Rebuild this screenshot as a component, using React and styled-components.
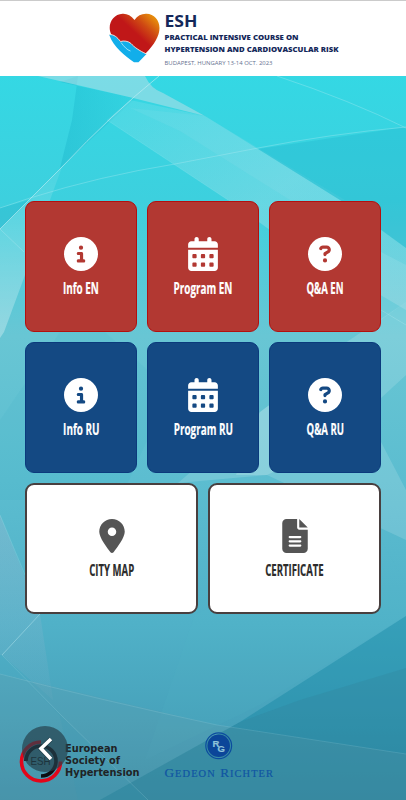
import React from 'react';
import styled, { createGlobalStyle } from 'styled-components';
import {
    FaCircleInfo,
    FaCalendarDays,
    FaCircleQuestion,
    FaLocationDot,
    FaFileLines
} from 'react-icons/fa6';

const GlobalStyle = createGlobalStyle`
    body {
        margin: 0;
        font-family: 'Open Sans', sans-serif;
    }
`

const Page = styled.div`
    position: relative;
    display: flex;
    flex-direction: column;
    width: 406px;
    height: 800px;
    overflow: hidden;
`

const Backdrop = styled.svg`
    position: absolute;
    top: 0;
    left: 0;
    z-index: -1;
`

const Header = styled.header`
    box-sizing: border-box;
    height: 76px;
    flex: none;
    padding-left: 105px;
    background: #fff;
    border-top: 1px solid #cbcbcb;
`

const Tiles = styled.main`
    display: grid;
    grid-template-columns: repeat(6, 1fr);
    grid-auto-rows: 131px;
    gap: 10px;
    padding: 125px 25px 0;
`

const tones = {
    red: { bg: '#b23832', line: '#b3100f', text: '#fff', icon: '#fff' },
    blue: { bg: '#144983', line: '#0b3a7c', text: '#fff', icon: '#fff' },
    white: { bg: '#fff', line: '#483f3f', text: '#2b2b2b', icon: '#555' }
}

const TileButton = styled.button`
    grid-column: span ${({ $wide }) => ($wide ? 3 : 2)};
    box-sizing: border-box;
    display: flex;
    flex-direction: column;
    align-items: center;
    margin: 0;
    padding: ${({ $wide }) => ($wide ? '34px' : '35px')} 0 0;
    border: ${({ $wide }) => ($wide ? '2px' : '1px')} solid ${({ $tone }) => tones[$tone].line};
    border-radius: 9px;
    background: ${({ $tone }) => tones[$tone].bg};
    color: ${({ $tone }) => tones[$tone].icon};
    font-family: inherit;
    cursor: pointer;
`

const Label = styled.span`
    margin-top: 5px;
    color: ${({ $tone }) => tones[$tone].text};
    font-size: 16.5px;
    font-weight: 700;
    line-height: 23px;
    white-space: nowrap;
    -webkit-text-stroke: 0.2px currentColor;
    transform: scaleX(${({ $squeeze }) => $squeeze});
`

const Footer = styled.footer`
    display: flex;
    align-items: flex-start;
    gap: 20px;
    margin-top: auto;
    padding-left: 18px;
    height: 74px;
`

const BackButton = styled.button`
    position: absolute;
    left: 22px;
    bottom: 28px;
    width: 46px;
    height: 46px;
    padding: 0;
    border: 0;
    border-radius: 50%;
    background: rgba(37, 65, 77, 0.7);
    cursor: pointer;
`

const Background = () => (
    <Backdrop width="406" height="800" viewBox="0 0 406 800">
        <defs>
            <linearGradient id="sea" x1="0" y1="0" x2="0" y2="1">
                <stop offset="0.09" stopColor="#34d8e4"/>
                <stop offset="0.25" stopColor="#3dd0de"/>
                <stop offset="0.42" stopColor="#68c6d4"/>
                <stop offset="0.6" stopColor="#5cbdd0"/>
                <stop offset="0.78" stopColor="#50b1c8"/>
                <stop offset="0.9" stopColor="#47a2bb"/>
                <stop offset="1" stopColor="#4094ad"/>
            </linearGradient>
            <linearGradient id="fade" x1="0" y1="0" x2="0" y2="1">
                <stop offset="0" stopColor="#fff" stopOpacity="0.08"/>
                <stop offset="1" stopColor="#fff" stopOpacity="0.3"/>
            </linearGradient>
            <linearGradient id="shade" x1="0" y1="0" x2="1" y2="0">
                <stop offset="0" stopColor="#0ba5c0" stopOpacity="0.28"/>
                <stop offset="1" stopColor="#0ba5c0" stopOpacity="0.06"/>
            </linearGradient>
            <linearGradient id="band" x1="0" y1="0" x2="1" y2="1">
                <stop offset="0" stopColor="#d9eaf0" stopOpacity="0.12"/>
                <stop offset="0.5" stopColor="#d9eaf0" stopOpacity="0.26"/>
                <stop offset="1" stopColor="#d9eaf0" stopOpacity="0.2"/>
            </linearGradient>
            <linearGradient id="strip" x1="0" y1="0" x2="0" y2="1">
                <stop offset="0" stopColor="#acb9d2" stopOpacity="0.3"/>
                <stop offset="1" stopColor="#acb9d2" stopOpacity="0.06"/>
            </linearGradient>
        </defs>
        <rect width="406" height="800" fill="url(#sea)"/>
        <path d="M78 76L72 120L60 168L136 98L129 97L60 82Z" fill="url(#shade)"/>
        <path d="M38 76H145Q151 89 163 93L205 116L129 97Z" fill="#c2dfe8" opacity="0.5"/>
        <path d="M107 120L130 100L205 116L340 200L406 248V310L270 230L228 200Z" fill="url(#band)"/>
        <path d="M130 108L180 131L290 200H345L205 116Z" fill="#d9eaf0" opacity="0.08"/>
        <path d="M406 127L258 149L340 200L406 248Z" fill="#0f9fc0" opacity="0.2"/>
        <path d="M0 208L30 200L0 229Z" fill="#109fbd" opacity="0.2"/>
        <path d="M0 229L62 167L50 200L25 275L4 332L0 338Z" fill="url(#fade)"/>
        <path d="M381 252L406 265V302L381 320Z" fill="#fff" opacity="0.1"/>
        <path d="M320 360L406 302V375L381 398Z" fill="#fff" opacity="0.14"/>
        <path d="M178 483L260 412L300 382L330 400L380 440L406 490V540L267 475Z" fill="#fff" opacity="0.14"/>
        <path d="M260 412L300 382L300 460L267 475H236Z" fill="#fff" opacity="0.16"/>
        <path d="M105 332L170 390L120 500H0V420L60 332Z" fill="#21a8c1" opacity="0.08"/>
        <path d="M0 515L40 614L53 700L2 655L0 655Z" fill="url(#strip)"/>
        <path d="M381 540L406 585V616L260 705L145 760L195 614Z" fill="#5fc1d2" opacity="0.08"/>
        <path d="M406 616L240 722L100 800H406Z" fill="#087f9f" opacity="0.36"/>
        <path d="M406 668L300 700L240 722L100 800H406Z" fill="#347789" opacity="0.18"/>
        <path d="M0 674L217 725L406 754V800H0Z" fill="#78959f" opacity="0.14"/>
        <path d="M2 655L60 716L78 800H148L60 714Z" fill="#2f9ab2" opacity="0.12"/>
        <g fill="none" stroke="#c5eff5">
            <path d="M159 76Q112 114 62 167L0 229" opacity="0.6"/>
            <path d="M0 208L30 198Q100 176 175 164L258 148Q330 134 406 127" opacity="0.3"/>
            <path d="M277 76Q352 101 406 128" opacity="0.3"/>
            <path d="M107 120L228 200" opacity="0.15"/>
            <path d="M40 614L2 655" opacity="0.4"/>
            <path d="M2 655L60 714L148 800" opacity="0.16"/>
            <path d="M0 674Q100 700 217 725L406 754" opacity="0.14"/>
            <path d="M0 229L24 252" opacity="0.3"/>
            <path d="M0 515L25 575" opacity="0.2"/>
            <path d="M381 310L406 325" opacity="0.25"/>
        </g>
    </Backdrop>
)

const CourseLogo = () => (
    <svg width="240" height="74" viewBox="105 1 240 74">
        <defs>
            <linearGradient id="heart" x1="0.55" y1="0.45" x2="0.9" y2="0.1">
                <stop offset="0" stopColor="#c01718"/>
                <stop offset="0.5" stopColor="#cf4a13"/>
                <stop offset="1" stopColor="#e58a0c"/>
            </linearGradient>
        </defs>
        <path
            d="M134.500 20C131 15.500 127 13.500 122.500 13.800C115 14.200 109.500 20.500 109.700 28C109.800 39 123 49 136 60L146 53C154 45 159.500 36 159.500 28C159.500 20 154 14 146.500 13.800C141.500 13.600 137.500 15.800 134.500 20Z"
            fill="url(#heart)"
        />
        <path
            d="M109.300 34.500C114 34.500 117 37 120.500 41.500C124 40.500 128 41 131 43.500C134 47 139 50.500 146.500 54L138.500 62.300H134C125 55.500 113.500 47.500 109.300 35Z"
            fill="#12aeea"
        />
        <path
            d="M109.300 34.500C114 34.500 117 37 120.500 41.500C124 40.500 128 41 131 43.500C134 47 139 50.500 146.500 54"
            fill="none"
            stroke="#ffe5df"
            strokeWidth="0.900"
        />
        <path d="M121 42.500C124 46.500 127 50 130.500 51" fill="none" stroke="#d7f2fb" strokeWidth="0.700"/>
        <g fill="#14285a" fontFamily="Open Sans, sans-serif" fontWeight="800">
            <text x="164.500" y="26.500" fontSize="15.800" fontWeight="700" textLength="33" lengthAdjust="spacingAndGlyphs">ESH</text>
            <text x="164.500" y="40.200" fontSize="7.400" textLength="134" lengthAdjust="spacingAndGlyphs">PRACTICAL INTENSIVE COURSE ON</text>
            <text x="164.500" y="52.200" fontSize="7.400" textLength="174" lengthAdjust="spacingAndGlyphs">HYPERTENSION AND CARDIOVASCULAR RISK</text>
            <text x="164.500" y="65.300" fontSize="5.900" fontWeight="400" fill="#66718f" textLength="108" lengthAdjust="spacingAndGlyphs">BUDAPEST, HUNGARY 13-14 OCT. 2023</text>
        </g>
    </svg>
)

const SocietyLogo = () => (
    <svg width="124" height="60" viewBox="18 726 124 60">
        <path d="M41 742A19.500 19.500 0 1 0 60.500 761.500" fill="none" stroke="#e3061a" strokeWidth="3.600"/>
        <path d="M26 761A15 15 0 1 1 41 776" fill="none" stroke="#0d0d12" strokeWidth="3.600"/>
        <text x="30.500" y="764.500" fontFamily="Liberation Sans, sans-serif" fontSize="10.500" fill="#0c1114" textLength="20" lengthAdjust="spacingAndGlyphs">ESH</text>
        <g fontFamily="DejaVu Sans, sans-serif" fontWeight="700" fontSize="10" fill="#1f2325">
            <text x="65" y="752.300" textLength="52.500" lengthAdjust="spacingAndGlyphs">European</text>
            <text x="65" y="764.300" textLength="55" lengthAdjust="spacingAndGlyphs">Society of</text>
            <text x="65" y="776.300" textLength="74.500" lengthAdjust="spacingAndGlyphs">Hypertension</text>
        </g>
    </svg>
)

const RichterLogo = () => (
    <svg width="116" height="60" viewBox="162 726 116 60">
        <circle cx="218.700" cy="745.700" r="12.900" fill="none" stroke="#0b4c9f" strokeWidth="1.200"/>
        <circle cx="218.700" cy="745.700" r="11.300" fill="#0b4699"/>
        <text x="212.600" y="746.600" fontFamily="Liberation Sans, sans-serif" fontWeight="700" fontSize="9.500" fill="#8fc3d9" stroke="#8fc3d9" strokeWidth="0.200">
            R<tspan x="217.600" dy="5.600">G</tspan>
        </text>
        <text x="164.500" y="777" fontFamily="Liberation Serif, serif" fontSize="13.200" fill="#1055a2" stroke="#1055a2" strokeWidth="0.200" textLength="108.500">
            G<tspan fontSize="10.400">EDEON</tspan> R<tspan fontSize="10.400">ICHTER</tspan>
        </text>
    </svg>
)

const items = [
    { name: 'Info EN', icon: FaCircleInfo, tone: 'red', squeeze: 0.6 },
    { name: 'Program EN', icon: FaCalendarDays, tone: 'red', squeeze: 0.6 },
    { name: 'Q&A EN', icon: FaCircleQuestion, tone: 'red', squeeze: 0.58 },
    { name: 'Info RU', icon: FaCircleInfo, tone: 'blue', squeeze: 0.6 },
    { name: 'Program RU', icon: FaCalendarDays, tone: 'blue', squeeze: 0.6 },
    { name: 'Q&A RU', icon: FaCircleQuestion, tone: 'blue', squeeze: 0.58 },
    { name: 'CITY MAP', icon: FaLocationDot, tone: 'white', squeeze: 0.58, wide: true },
    { name: 'CERTIFICATE', icon: FaFileLines, tone: 'white', squeeze: 0.58, wide: true }
]

const Tile = ({ name, icon: Icon, tone, squeeze, wide }) => (
    <TileButton $tone={tone} $wide={wide}>
        <Icon size={34}/>
        <Label $tone={tone} $squeeze={squeeze}>{name}</Label>
    </TileButton>
)

const App = () => (
    <Page>
        <GlobalStyle/>
        <Background/>
        <Header>
            <CourseLogo/>
        </Header>
        <Tiles>
            {items.map(item => <Tile key={item.name} {...item}/>)}
        </Tiles>
        <Footer>
            <SocietyLogo/>
            <RichterLogo/>
        </Footer>
        <BackButton aria-label="Back">
            <svg width="46" height="46" viewBox="0 0 46 46" fill="none">
                <path d="M29 13L19 22.500L29 33" stroke="#14262d" strokeWidth="5" opacity="0.5"/>
                <path d="M29 13L19 22.500L29 33" stroke="#fff" strokeWidth="3.600"/>
            </svg>
        </BackButton>
    </Page>
)

export default App;
